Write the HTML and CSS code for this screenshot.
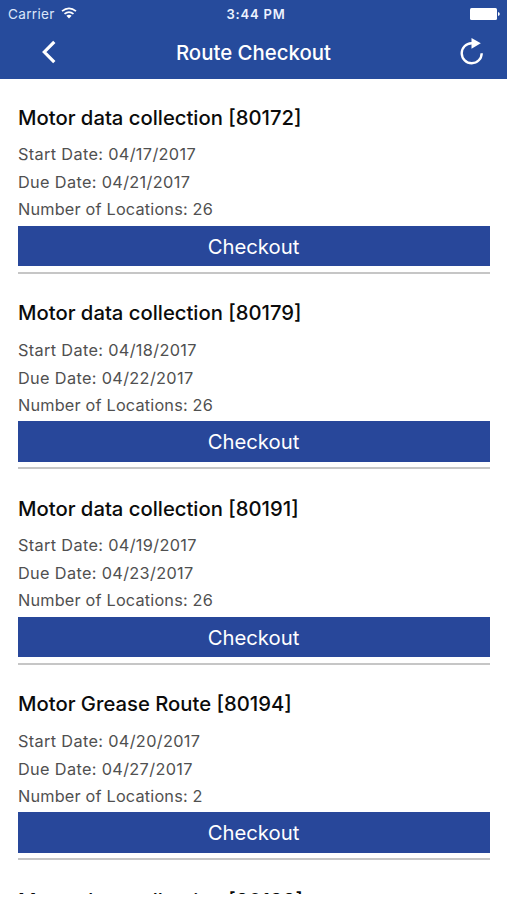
FILE: index.html
```
<!DOCTYPE html>
<html lang="en">
<head>
<meta charset="utf-8">
<title>Route Checkout</title>
<link rel="stylesheet" href="styles.css">
</head>
<body>
<div class="screen">
  <header class="header">
    <div class="status">
      <div class="carrier"><span>Carrier</span>
        <svg class="wifi" width="16" height="12" viewBox="0 0 16 12" fill="none" stroke="currentColor" stroke-width="1.7"><path d="M1 4.2Q8-1.6 15 4.2M3.5 6.9Q8 3.2 12.5 6.9"/><path d="M5.4 8.8Q8 6.8 10.6 8.8L8 11.5Z" fill="currentColor" stroke="none"/></svg>
      </div>
      <span class="time">3:44 PM</span>
      <svg class="battery" width="30" height="12" viewBox="0 0 30 12" fill="currentColor"><rect width="27" height="12" rx="1.5"/><path d="M28 4Q29.8 4.5 29.8 6T28 8Z"/></svg>
    </div>
    <nav class="nav">
      <svg class="back" width="14" height="24" viewBox="0 0 14 24" fill="none" stroke="currentColor" stroke-width="3.2"><path d="M12.3 1.8L2.3 12L12.3 22.2"/></svg>
      <h1 class="title">Route Checkout</h1>
      <svg class="reload" width="24" height="28" viewBox="0 0 24 28" fill="none" stroke="currentColor" stroke-width="2.4"><path d="M12.5 5.2H11.5A10 10 0 1 0 21.7 15.2"/><path d="M11.5 0L20.8 5.2L11.5 10.7Z" fill="currentColor" stroke="none"/></svg>
    </nav>
  </header>
  <main class="list">
    <section class="route"><h2 class="name">Motor data collection [80172]</h2><p class="start">Start Date: 04/17/2017</p><p class="due">Due Date: 04/21/2017</p><p class="count">Number of Locations: 26</p><button class="checkout">Checkout</button></section>
    <section class="route"><h2 class="name">Motor data collection [80179]</h2><p class="start">Start Date: 04/18/2017</p><p class="due">Due Date: 04/22/2017</p><p class="count">Number of Locations: 26</p><button class="checkout">Checkout</button></section>
    <section class="route"><h2 class="name">Motor data collection [80191]</h2><p class="start">Start Date: 04/19/2017</p><p class="due">Due Date: 04/23/2017</p><p class="count">Number of Locations: 26</p><button class="checkout">Checkout</button></section>
    <section class="route"><h2 class="name">Motor Grease Route [80194]</h2><p class="start">Start Date: 04/20/2017</p><p class="due">Due Date: 04/27/2017</p><p class="count">Number of Locations: 2</p><button class="checkout">Checkout</button></section>
    <section class="route"><h2 class="name">Motor data collection [80198]</h2></section>
  </main>
</div>
</body>
</html>
```
FILE: styles.css
```
* { box-sizing: border-box; }
body { margin: 0; background: #fff; font-family: Inter, "Liberation Sans", sans-serif; }
h1, h2, p { margin: 0; font-weight: 400; white-space: nowrap; }
svg { display: block; }
.screen { width: 507px; height: 894px; overflow: hidden; display: flex; flex-direction: column; }
.header { flex: none; height: 79px; background: #264b9c; color: #fff; }
.status { height: 27px; display: grid; grid-template-columns: 1fr auto 1fr; align-items: center; padding: 0 7px 0 8px; }
.carrier { display: flex; align-items: center; gap: 6px; font-size: 13.6px; color: #dbe6fa; letter-spacing: .3px; }
.wifi { color: #fff; margin-top: -2px; }
.time { margin-left: 4px; font-size: 13px; font-weight: 600; letter-spacing: .8px; color: #edf3ff; }
.battery { justify-self: end; }
.nav { height: 50px; display: grid; grid-template-columns: 1fr auto 1fr; align-items: center; padding: 0 23px; }
.back { margin-left: 19px; }
.title { font-size: 20.4px; font-weight: 500; }
.reload { justify-self: end; }
.list { flex: none; margin-top: -1px; padding: 0 17.5px; }
.route { height: 195.5px; padding-top: 25.5px; border-bottom: 2px solid #c6c6c6; }
.route:last-child { padding-top: 27px; }
.name { font-size: 20.25px; font-weight: 500; line-height: 28px; color: #0b0b0b; padding-left: .5px; }
.start, .due, .count { padding-left: .5px; font-size: 16.3px; line-height: 28px; color: #505050; }
.start { margin-top: 8.5px; letter-spacing: .34px; }
.due { letter-spacing: .34px; }
.count { line-height: 27px; letter-spacing: .18px; }
.checkout { display: block; width: 100%; height: 40.5px; margin-top: 2.5px; padding: 1px 0 0; border: 0; background: #28479a; color: #fff; font: 400 20.3px Inter, "Liberation Sans", sans-serif; }
```
